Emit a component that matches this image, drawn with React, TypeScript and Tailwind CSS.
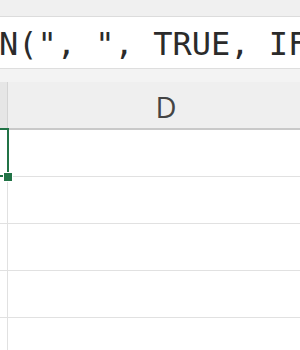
const rows = [0, 1, 2, 3, 4];

const App = () => {
  return (
    <div className="w-[300px] h-[350px] overflow-hidden bg-white">
      {/* ribbon edge */}
      <div className="h-[17px] bg-[#f0f0f0] border-b border-[#dcdcdc]" />

      {/* formula bar */}
      <div className="h-[52px] bg-white border-b border-[#dedede] flex items-center overflow-hidden">
        <span
          className="whitespace-nowrap text-[32px] leading-none text-[#2b2b2b] ml-[-1px] mt-[2px]"
          style={{ fontFamily: '"DejaVu Sans Mono", "Liberation Mono", monospace' }}
        >
          N(", ", TRUE, IF(
        </span>
      </div>

      <div className="h-[13px] bg-[#f3f3f3]" />

      {/* column header */}
      <div className="flex h-[48px] bg-[#efefef] border-b-2 border-[#c9c9c9]">
        <div className="w-[8px] shrink-0 bg-[#e6e6e6] border-r border-[#d4d4d4]" />
        <div
          className="w-[316px] shrink-0 flex items-center justify-center pt-[3px] text-[29px] text-[#444]"
          style={{ fontFamily: '"Open Sans", "Noto Sans", sans-serif' }}
        >
          D
        </div>
      </div>

      {/* grid rows */}
      <div className="relative">
        {rows.map((r) => (
          <div key={r} className="flex h-[47px] border-b border-[#e1e1e1]">
            <div className="w-[8px] shrink-0 border-r border-[#e1e1e1]" />
            <div className="flex-1" />
          </div>
        ))}

        {/* active cell selection (cell to the left, mostly offscreen) */}
        <div className="absolute left-0 top-[-2px] w-[9px] h-[49px] border-t-2 border-r-2 border-b-2 border-[#217346]" />
        <div className="absolute left-[3px] top-[42px] w-[8px] h-[8px] bg-[#217346] border border-white box-content" />
      </div>
    </div>
  );
};

export default App;
